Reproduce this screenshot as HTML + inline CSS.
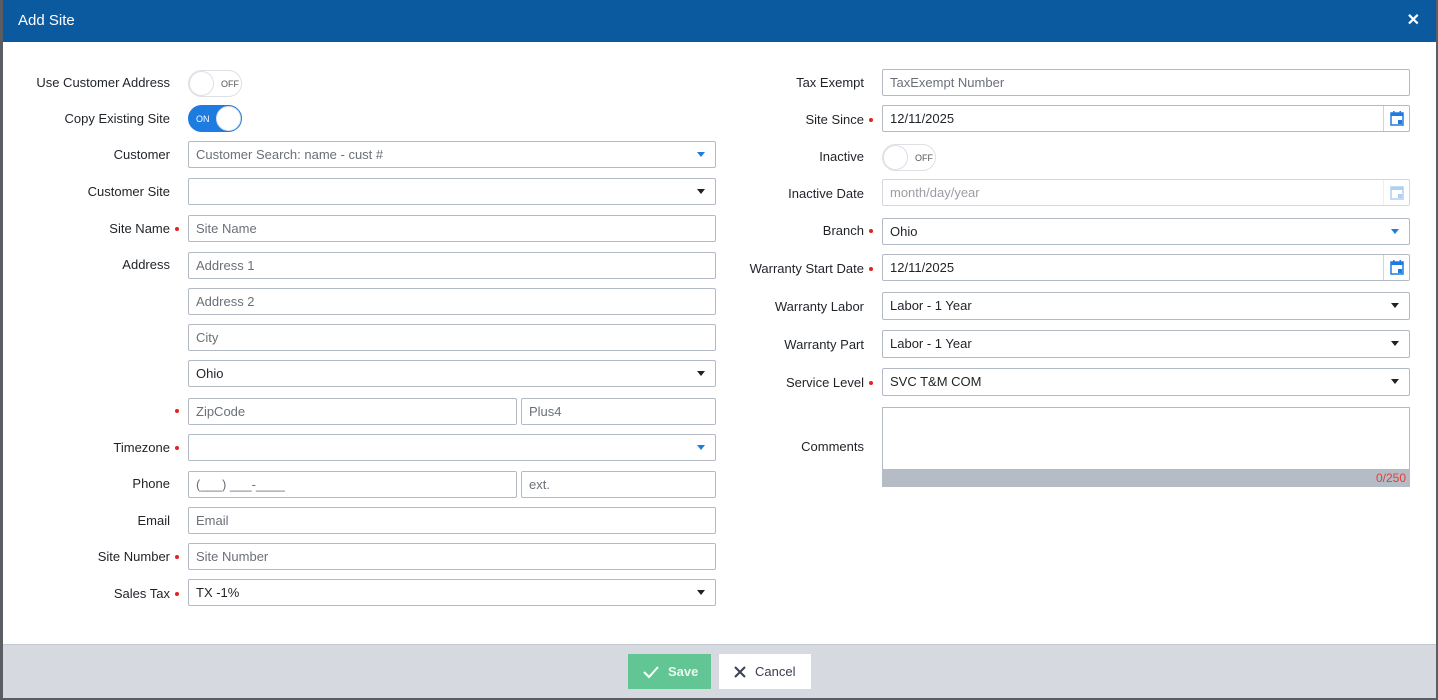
<!DOCTYPE html>
<html><head><style>
*{box-sizing:border-box;margin:0;padding:0}
body{width:1438px;height:700px;background:#5a5e63;font-family:"Liberation Sans",sans-serif;font-size:13px;color:#1f2328;position:relative;overflow:hidden}
.m{position:absolute;left:3px;top:0;width:1433px;height:698px;background:#fff}
.hd{position:absolute;left:0;top:0;width:100%;height:42px;background:#0b5aa0;color:#fff;font-size:15px;line-height:42px;padding-left:15px}
.x{position:absolute;right:16px;top:0;font-size:16px;font-weight:bold}
.ft{position:absolute;left:0;top:644px;width:100%;height:54px;background:#d6dae0;border-top:1px solid #c4c9d0}
.l{position:absolute;text-align:right;width:200px;line-height:16px}
.d{position:absolute;width:4px;height:4px;border-radius:50%;background:#e02424}
.i{position:absolute;height:27px;border:1px solid #b4bac3;border-radius:2px;padding-left:7px;line-height:25px;color:#6b7078;background:#fff}
.v{color:#1f2328}
.ar{position:absolute;right:10px;top:10px;width:0;height:0;border-left:4px solid transparent;border-right:4px solid transparent;border-top:5px solid #222}
.ar.b{border-top-color:#1e7be0}
.cal{position:absolute;right:0;top:0;width:26px;height:100%;border-left:1px solid #d0d4da}
.tg{position:absolute;width:54px;height:27px;border-radius:14px;border:1px solid #dde0e4;background:#fff}
.tg .k{position:absolute;top:0;width:25px;height:25px;border-radius:50%;background:#fff;border:1px solid #dde0e4}
.tg span{position:absolute;font-size:9px;top:8px}
</style></head><body>
<div class="m">
<div class="hd">Add Site<span class="x">✕</span></div>

<!-- left -->
<div class="l" style="left:-33px;top:75px">Use Customer Address</div>
<div class="tg" style="left:185px;top:70px"><div class="k" style="left:0"></div><span style="left:32px;color:#555">OFF</span></div>
<div class="l" style="left:-33px;top:111px">Copy Existing Site</div>
<div class="tg" style="left:185px;top:105px;background:#1e7be0;border-color:#1e7be0"><div class="k" style="right:0"></div><span style="left:7px;color:#fff">ON</span></div>

<div class="l" style="left:-33px;top:147px">Customer</div>
<div class="i" style="left:185px;top:141px;width:528px">Customer Search: name - cust #<div class="ar b"></div></div>
<div class="l" style="left:-33px;top:184px">Customer Site</div>
<div class="i" style="left:185px;top:178px;width:528px"><div class="ar"></div></div>
<div class="l" style="left:-33px;top:221px">Site Name</div><div class="d" style="left:172px;top:227px"></div>
<div class="i" style="left:185px;top:215px;width:528px">Site Name</div>
<div class="l" style="left:-33px;top:257px">Address</div>
<div class="i" style="left:185px;top:252px;width:528px">Address 1</div>
<div class="i" style="left:185px;top:288px;width:528px">Address 2</div>
<div class="i" style="left:185px;top:324px;width:528px">City</div>
<div class="i v" style="left:185px;top:360px;width:528px">Ohio<div class="ar"></div></div>
<div class="d" style="left:172px;top:409px"></div>
<div class="i" style="left:185px;top:398px;width:329px">ZipCode</div>
<div class="i" style="left:518px;top:398px;width:195px">Plus4</div>
<div class="l" style="left:-33px;top:440px">Timezone</div><div class="d" style="left:172px;top:446px"></div>
<div class="i" style="left:185px;top:434px;width:528px"><div class="ar b"></div></div>
<div class="l" style="left:-33px;top:476px">Phone</div>
<div class="i" style="left:185px;top:471px;width:329px">(___) ___-____</div>
<div class="i" style="left:518px;top:471px;width:195px">ext.</div>
<div class="l" style="left:-33px;top:513px">Email</div>
<div class="i" style="left:185px;top:507px;width:528px">Email</div>
<div class="l" style="left:-33px;top:549px">Site Number</div><div class="d" style="left:172px;top:555px"></div>
<div class="i" style="left:185px;top:543px;width:528px">Site Number</div>
<div class="l" style="left:-33px;top:586px">Sales Tax</div><div class="d" style="left:172px;top:592px"></div>
<div class="i v" style="left:185px;top:579px;width:528px">TX -1%<div class="ar"></div></div>

<!-- right -->
<div class="l" style="left:661px;top:75px">Tax Exempt</div>
<div class="i" style="left:879px;top:69px;width:528px">TaxExempt Number</div>
<div class="l" style="left:661px;top:112px">Site Since</div><div class="d" style="left:866px;top:118px"></div>
<div class="i v" style="left:879px;top:105px;width:528px">12/11/2025<div class="cal"><svg width="26" height="26" viewBox="0 0 26 26"><rect x="7" y="7" width="12" height="12" fill="none" stroke="#1e7be0" stroke-width="1.5"/><rect x="7" y="7" width="12" height="3" fill="#1e7be0"/><rect x="9" y="5" width="1.5" height="3" fill="#1e7be0"/><rect x="15.5" y="5" width="1.5" height="3" fill="#1e7be0"/><rect x="14" y="14" width="4" height="4" fill="#1e7be0"/></svg></div></div>
<div class="l" style="left:661px;top:149px">Inactive</div>
<div class="tg" style="left:879px;top:144px"><div class="k" style="left:0"></div><span style="left:32px;color:#555">OFF</span></div>
<div class="l" style="left:661px;top:186px">Inactive Date</div>
<div class="i" style="left:879px;top:179px;width:528px;border-color:#d4d8de;color:#9a9ea4">month/day/year<div class="cal" style="opacity:.35"><svg width="26" height="26" viewBox="0 0 26 26"><rect x="7" y="7" width="12" height="12" fill="none" stroke="#1e7be0" stroke-width="1.5"/><rect x="7" y="7" width="12" height="3" fill="#1e7be0"/><rect x="14" y="14" width="4" height="4" fill="#1e7be0"/></svg></div></div>
<div class="l" style="left:661px;top:223px">Branch</div><div class="d" style="left:866px;top:229px"></div>
<div class="i v" style="left:879px;top:218px;width:528px">Ohio<div class="ar b"></div></div>
<div class="l" style="left:661px;top:261px">Warranty Start Date</div><div class="d" style="left:866px;top:267px"></div>
<div class="i v" style="left:879px;top:254px;width:528px">12/11/2025<div class="cal"><svg width="26" height="26" viewBox="0 0 26 26"><rect x="7" y="7" width="12" height="12" fill="none" stroke="#1e7be0" stroke-width="1.5"/><rect x="7" y="7" width="12" height="3" fill="#1e7be0"/><rect x="9" y="5" width="1.5" height="3" fill="#1e7be0"/><rect x="15.5" y="5" width="1.5" height="3" fill="#1e7be0"/><rect x="14" y="14" width="4" height="4" fill="#1e7be0"/></svg></div></div>
<div class="l" style="left:661px;top:299px">Warranty Labor</div>
<div class="i v" style="left:879px;top:292px;width:528px;height:28px">Labor - 1 Year<div class="ar"></div></div>
<div class="l" style="left:661px;top:337px">Warranty Part</div>
<div class="i v" style="left:879px;top:330px;width:528px;height:28px">Labor - 1 Year<div class="ar"></div></div>
<div class="l" style="left:661px;top:375px">Service Level</div><div class="d" style="left:866px;top:381px"></div>
<div class="i v" style="left:879px;top:368px;width:528px;height:28px">SVC T&amp;M COM<div class="ar"></div></div>
<div class="l" style="left:661px;top:439px">Comments</div>
<div class="i" style="left:879px;top:407px;width:528px;height:63px;border-radius:0"></div>
<div style="position:absolute;left:879px;top:469px;width:528px;height:18px;background:#b6bcc5;color:#e0403a;text-align:right;padding-right:4px;line-height:18px;font-size:12px">0/250</div>

<div class="ft">
<div style="position:absolute;left:625px;top:9px;width:83px;height:35px;background:#62c594;color:#e8f7ef;line-height:35px;font-weight:bold;padding-left:40px">Save<svg style="position:absolute;left:14px;top:11px" width="18" height="14" viewBox="0 0 18 14"><path d="M2 7 L7 12 L16 2" fill="none" stroke="#fff" stroke-width="2"/></svg></div>
<div style="position:absolute;left:716px;top:9px;width:92px;height:35px;background:#fff;color:#3a4050;line-height:35px;padding-left:36px">Cancel<svg style="position:absolute;left:15px;top:12px" width="12" height="12" viewBox="0 0 12 12"><path d="M1 1L11 11M11 1L1 11" stroke="#3a4050" stroke-width="2"/></svg></div>
</div>
</div>
</body></html>
